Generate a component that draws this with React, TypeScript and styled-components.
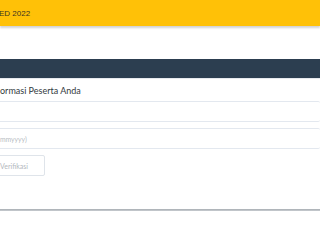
import React from "react";
import styled, { createGlobalStyle } from "styled-components";

const Global = createGlobalStyle`
  html, body { margin: 0; padding: 0; background: #ffffff; overflow: hidden; }
  body { font-family: Lato, "Open Sans", Arial, sans-serif; width: 320px; height: 240px; }
`;

const Page = styled.div`
  display: flex;
  flex-direction: column;
  width: 320px;
  height: 240px;
  overflow: hidden;
`;

const Header = styled.header`
  height: 26px;
  background: #ffc107;
  box-shadow: 0 2px 2px rgba(0, 0, 0, 0.18);
  display: flex;
  align-items: center;
  padding-top: 1px;
  box-sizing: border-box;
  font-family: "Liberation Sans", Arial, sans-serif;
  font-size: 8px;
  color: #3a3320;
  position: relative;
  z-index: 1;
`;

const Brand = styled.span`
  margin-left: -1px;
`;

const Spacer = styled.div`
  height: 33px;
`;

const NavBar = styled.nav`
  height: 19px;
  background: #2c3e50;
  border-bottom: 1px solid #e6e9ee;
`;

const Form = styled.section`
  display: flex;
  flex-direction: column;
  margin-left: -12px;
  padding-top: 5px;
`;

const Title = styled.h2`
  margin: 0 0 0 12px;
  font-size: 9px;
  font-weight: 400;
  color: #333a40;
  line-height: 14px;
  height: 14px;
`;

const Field = styled.div<{ $gap: number }>`
  height: 21px;
  border: 1px solid #e3e8ef;
  border-right: none;
  border-radius: 2px;
  margin-top: ${(p) => p.$gap}px;
  display: flex;
  align-items: center;
  padding-left: 11px;
  box-sizing: border-box;
  font-size: 6.8px;
  color: #b7bcc2;
`;

const Button = styled.div`
  width: 57px;
  height: 21px;
  margin-top: 6px;
  border: 1px solid #dfe4ea;
  border-radius: 2px;
  display: flex;
  align-items: center;
  padding-left: 11px;
  box-sizing: border-box;
  font-size: 7px;
  color: #b3b8be;
`;

const Rule = styled.hr`
  margin: 33px 0 0 0;
  border: none;
  height: 2px;
  background: linear-gradient(#a7adb2, #c9cdd1);
`;

export default function App() {
  return (
    <>
      <Global />
      <Page>
        <Header>
          <Brand>ED 2022</Brand>
        </Header>
        <Spacer />
        <NavBar />
        <Form>
          <Title>ormasi Peserta Anda</Title>
          <Field $gap={3} />
          <Field $gap={6}>mmyyyy)</Field>
          <Button>Verifikasi</Button>
        </Form>
        <Rule />
      </Page>
    </>
  );
}
